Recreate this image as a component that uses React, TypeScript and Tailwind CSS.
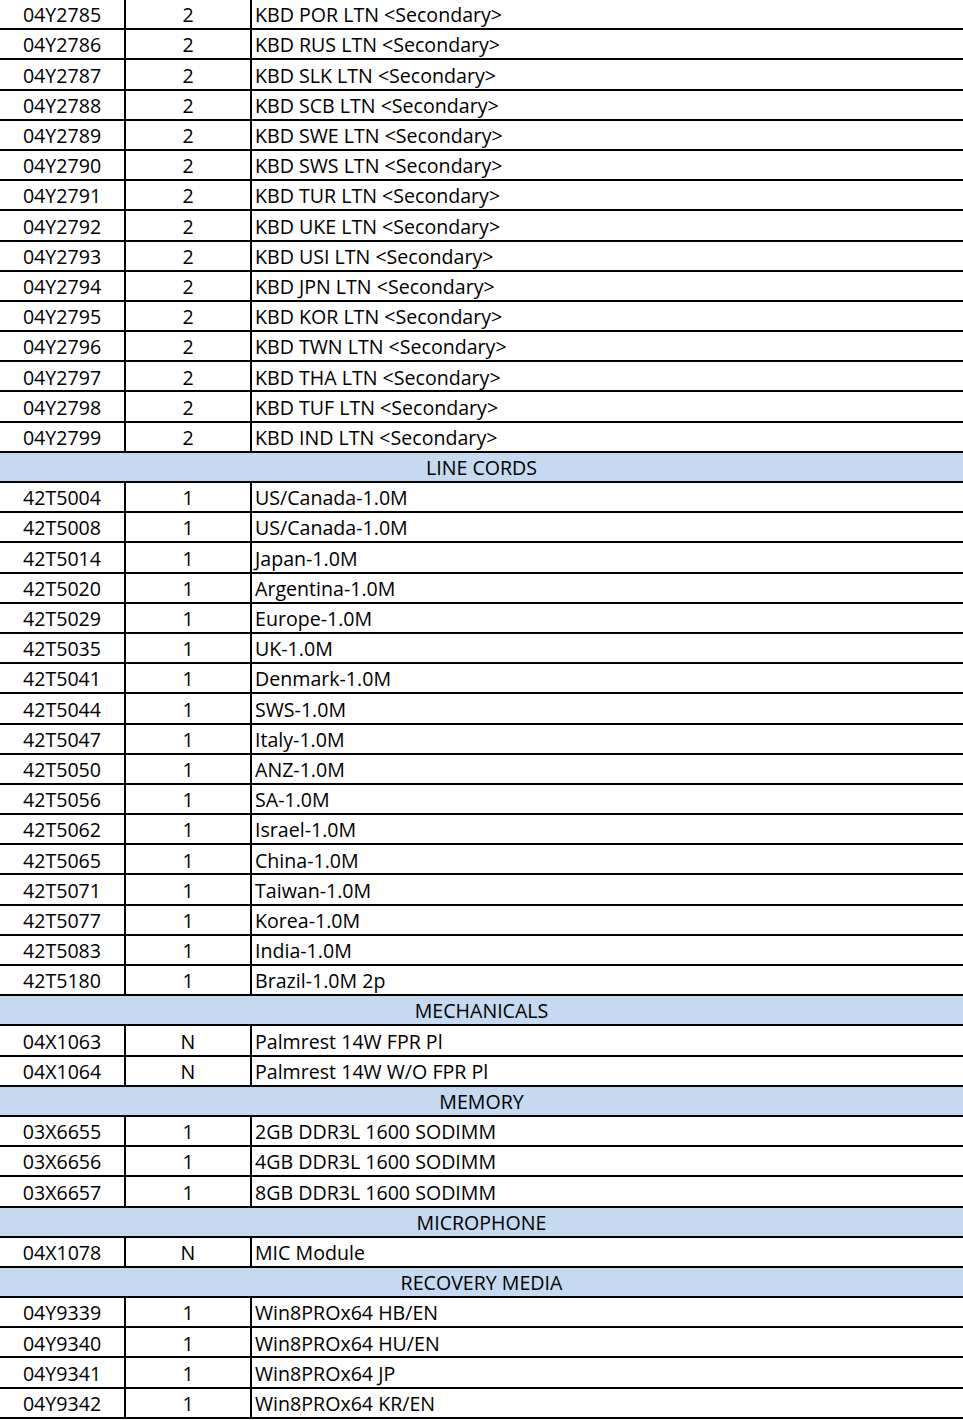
type Row = [string, string, string] | string

const rows: Row[] = [
  ["04Y2785", "2", "KBD POR LTN <Secondary>"],
  ["04Y2786", "2", "KBD RUS LTN <Secondary>"],
  ["04Y2787", "2", "KBD SLK LTN <Secondary>"],
  ["04Y2788", "2", "KBD SCB LTN <Secondary>"],
  ["04Y2789", "2", "KBD SWE LTN <Secondary>"],
  ["04Y2790", "2", "KBD SWS LTN <Secondary>"],
  ["04Y2791", "2", "KBD TUR LTN <Secondary>"],
  ["04Y2792", "2", "KBD UKE LTN <Secondary>"],
  ["04Y2793", "2", "KBD USI LTN <Secondary>"],
  ["04Y2794", "2", "KBD JPN LTN <Secondary>"],
  ["04Y2795", "2", "KBD KOR LTN <Secondary>"],
  ["04Y2796", "2", "KBD TWN LTN <Secondary>"],
  ["04Y2797", "2", "KBD THA LTN <Secondary>"],
  ["04Y2798", "2", "KBD TUF LTN <Secondary>"],
  ["04Y2799", "2", "KBD IND LTN <Secondary>"],
  "LINE CORDS",
  ["42T5004", "1", "US/Canada-1.0M"],
  ["42T5008", "1", "US/Canada-1.0M"],
  ["42T5014", "1", "Japan-1.0M"],
  ["42T5020", "1", "Argentina-1.0M"],
  ["42T5029", "1", "Europe-1.0M"],
  ["42T5035", "1", "UK-1.0M"],
  ["42T5041", "1", "Denmark-1.0M"],
  ["42T5044", "1", "SWS-1.0M"],
  ["42T5047", "1", "Italy-1.0M"],
  ["42T5050", "1", "ANZ-1.0M"],
  ["42T5056", "1", "SA-1.0M"],
  ["42T5062", "1", "Israel-1.0M"],
  ["42T5065", "1", "China-1.0M"],
  ["42T5071", "1", "Taiwan-1.0M"],
  ["42T5077", "1", "Korea-1.0M"],
  ["42T5083", "1", "India-1.0M"],
  ["42T5180", "1", "Brazil-1.0M 2p"],
  "MECHANICALS",
  ["04X1063", "N", "Palmrest 14W FPR Pl"],
  ["04X1064", "N", "Palmrest 14W W/O FPR Pl"],
  "MEMORY",
  ["03X6655", "1", "2GB DDR3L 1600 SODIMM"],
  ["03X6656", "1", "4GB DDR3L 1600 SODIMM"],
  ["03X6657", "1", "8GB DDR3L 1600 SODIMM"],
  "MICROPHONE",
  ["04X1078", "N", "MIC Module"],
  "RECOVERY MEDIA",
  ["04Y9339", "1", "Win8PROx64 HB/EN"],
  ["04Y9340", "1", "Win8PROx64 HU/EN"],
  ["04Y9341", "1", "Win8PROx64 JP"],
  ["04Y9342", "1", "Win8PROx64 KR/EN"],
]

export default function App() {
  return (
    <div className="w-[963px] bg-white text-black text-[19.6px] font-['Open_Sans',sans-serif]">
      {rows.map((r, i) =>
        typeof r === "string" ? (
          <div
            key={i}
            className="h-[30.2px] border-b-2 border-black bg-[#c5d9f1] flex items-center justify-center leading-none pt-[2px]"
          >
            {r}
          </div>
        ) : (
          <div key={i} className="h-[30.2px] border-b-2 border-black flex leading-none">
            <div className="w-[126px] border-r-2 border-black flex items-center justify-center pt-[2px]">{r[0]}</div>
            <div className="w-[126px] border-r-2 border-black flex items-center justify-center pt-[2px]">{r[1]}</div>
            <div className="flex-1 flex items-center pl-[3px] pt-[2px]">{r[2]}</div>
          </div>
        )
      )}
    </div>
  )
}
